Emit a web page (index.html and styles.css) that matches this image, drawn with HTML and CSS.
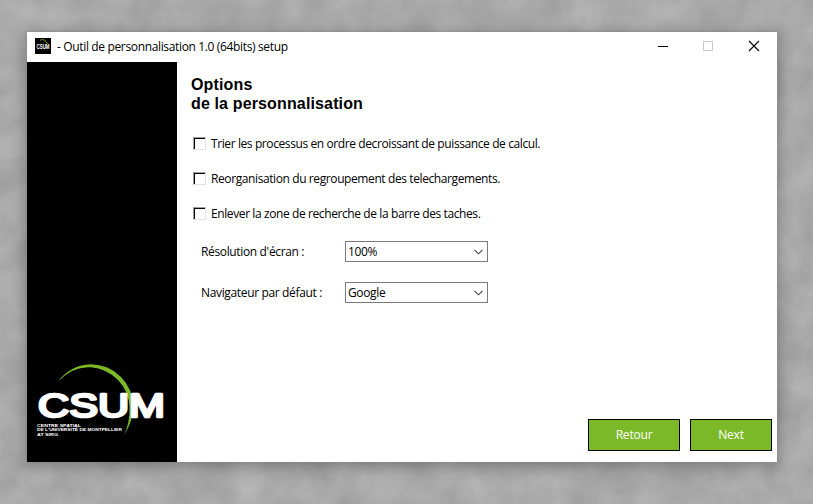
FILE: index.html
```html
<!DOCTYPE html>
<html lang="fr">
<head>
<meta charset="utf-8">
<title>Outil de personnalisation</title>
<link rel="stylesheet" href="styles.css">
</head>
<body>
<svg class="desktop" width="813" height="504" aria-hidden="true">
  <filter id="concrete" x="0" y="0" width="100%" height="100%" color-interpolation-filters="sRGB">
    <feTurbulence type="fractalNoise" baseFrequency="0.03" numOctaves="5" seed="8"/>
    <feColorMatrix values="0.12 0 0 0 0.605  0.12 0 0 0 0.605  0.12 0 0 0 0.605  0 0 0 0 1"/>
  </filter>
  <rect width="813" height="504" filter="url(#concrete)"/>
</svg>
<main class="window">
  <header class="titlebar">
    <svg class="app-icon" viewBox="0 0 16 16">
      <rect width="16" height="16" fill="#000"/>
      <path d="M5 2.2Q10 0 12.5 6" fill="none" stroke="#6aa51f"/>
      <text class="wordmark" x="1.5" y="11" font-size="6.5" textLength="13" lengthAdjust="spacingAndGlyphs">CSUM</text>
    </svg>
    <span class="title">- Outil de personnalisation 1.0 (64bits) setup</span>
    <div class="controls">
      <svg viewBox="0 0 10 10"><path d="M0 5.5H10" stroke="#000"/></svg>
      <svg viewBox="0 0 10 10"><rect x=".5" y=".5" width="9" height="9" fill="none" stroke="#ccc"/></svg>
      <svg viewBox="0 0 10 10"><path d="M0 0L10 10M10 0L0 10" stroke="#000" stroke-width="1.1"/></svg>
    </div>
  </header>
  <div class="body">
    <aside class="sidebar">
      <svg class="logo" viewBox="0 0 150 90">
        <path d="M31 26.5A43 43 0 0 1 64 9.2A43 43 0 0 1 106.5 52Q106 66 97 80Q103 68 102.5 52A42 41 0 0 0 64 12.3Q46 11 31 26.5Z" fill="#7cb928"/>
        <text class="wordmark big" x="11" y="62" font-size="33" textLength="127" lengthAdjust="spacingAndGlyphs">CSUM</text>
        <g class="caption">
          <text x="10" y="71.5" textLength="44" lengthAdjust="spacingAndGlyphs">CENTRE SPATIAL</text>
          <text x="10" y="76" textLength="85" lengthAdjust="spacingAndGlyphs">DE L'UNIVERSITÉ DE MONTPELLIER</text>
          <text x="10" y="80.5" textLength="21" lengthAdjust="spacingAndGlyphs">AT SIRG</text>
        </g>
      </svg>
    </aside>
    <section class="content">
      <h1>Options<br>de la personnalisation</h1>
      <div class="checks">
        <label><i class="box"></i><span>Trier les processus en ordre decroissant de puissance de calcul.</span></label>
        <label><i class="box"></i><span>Reorganisation du regroupement des telechargements.</span></label>
        <label><i class="box"></i><span>Enlever la zone de recherche de la barre des taches.</span></label>
      </div>
      <div class="fields">
        <span>Résolution d'écran :</span>
        <div class="select"><span>100%</span><svg viewBox="0 0 9 6"><path d="M.5 .8L4.5 4.8L8.5 .8"/></svg></div>
        <span>Navigateur par défaut :</span>
        <div class="select"><span>Google</span><svg viewBox="0 0 9 6"><path d="M.5 .8L4.5 4.8L8.5 .8"/></svg></div>
      </div>
      <footer>
        <button class="back">Retour</button>
        <button class="next">Next</button>
      </footer>
    </section>
  </div>
</main>
</body>
</html>
```
FILE: styles.css
```css
* { box-sizing: border-box; }
body {
  margin: 0;
  width: 813px;
  height: 504px;
  overflow: hidden;
  padding: 32px 0 0 27px;
  background: #a8a8a8;
  font: 12px/16px "Open Sans", "Noto Sans", sans-serif;
  color: #000;
}
.desktop { position: absolute; left: 0; top: 0; z-index: -1; }
.window {
  width: 750px;
  height: 430px;
  background: #fff;
  display: flex;
  flex-direction: column;
  box-shadow: 0 0 0 1px rgba(140,140,140,.5), 0 3px 14px 1px rgba(0,0,0,.3);
}
.titlebar { height: 30px; display: flex; align-items: center; padding: 0 18px 2px 8px; }
.app-icon { width: 16px; height: 16px; overflow: visible; }
.title { margin-left: 6px; padding-top: 2px; letter-spacing: -.35px; white-space: nowrap; }
.controls { margin-left: auto; display: flex; gap: 36px; }
.controls svg { width: 10px; height: 10px; overflow: visible; }
.controls svg:first-child { margin-right: -1px; }
.body { flex: 1; display: flex; }
.sidebar { width: 150px; background: #000; display: flex; flex-direction: column; justify-content: flex-end; padding-bottom: 17px; }
.logo { width: 150px; height: 90px; }
.wordmark { fill: #fff; font-family: "Liberation Sans", sans-serif; font-weight: bold; }
.big { font-weight: normal; stroke: #fff; stroke-width: 2.6; stroke-linejoin: round; }
.caption { fill: #fff; font: bold 4.3px "Liberation Sans", sans-serif; }
.content { flex: 1; display: flex; flex-direction: column; padding: 13px 5px 11px 14px; }
h1 { margin: 0; font: bold 16px/19px "Liberation Sans", sans-serif; letter-spacing: .14px; }
.checks { margin-top: 23px; display: flex; flex-direction: column; gap: 19px; }
.checks label { display: flex; align-items: center; height: 16px; padding-left: 2px; white-space: nowrap; letter-spacing: -.4px; }
.box { width: 13px; height: 13px; margin: 0 5px 2px 0; border: 1px solid; border-color: #a0a0a0 #e3e3e3 #e3e3e3 #a0a0a0; box-shadow: inset 1px 1px #000; }
.fields { margin: 19px 0 0 10px; display: grid; grid-template-columns: 144px 143px; row-gap: 20px; align-items: center; letter-spacing: -.35px; white-space: nowrap; }
.select { height: 21px; border: 1px solid #7a7a7a; display: flex; align-items: center; justify-content: space-between; padding: 0 4px 0 2px; }
.select svg { width: 9px; height: 6px; fill: none; stroke: #444; stroke-width: 1.1; }
footer { margin-top: auto; display: flex; justify-content: flex-end; gap: 10px; }
button { height: 32px; padding: 0; border: 1px solid #000; background: #7cb928; color: #fff; font: inherit; letter-spacing: -.2px; }
.back { width: 92px; }
.next { width: 82px; }
```
